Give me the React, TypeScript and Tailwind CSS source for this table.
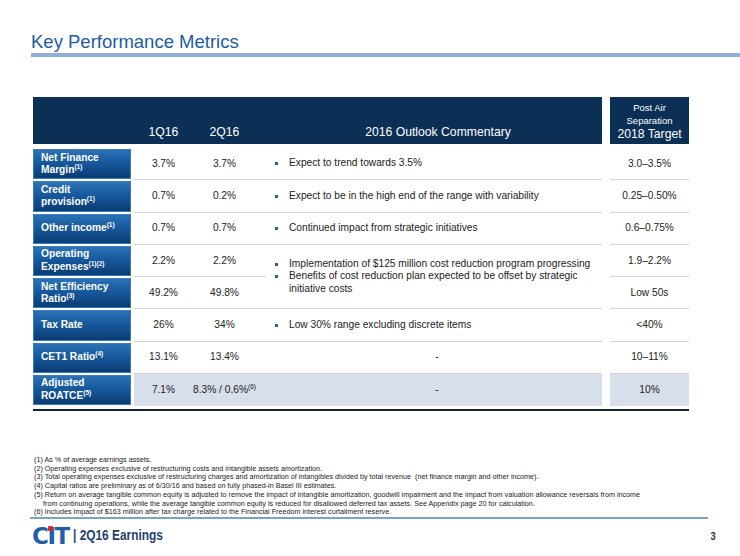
import React from 'react';

type Row = {
  label: string[];
  sup?: string;
  q1: string;
  q2: React.ReactNode;
  comment?: string[] | null; // null = covered by merged cell above
  dash?: boolean;
  target: string;
  span?: boolean;
  last?: boolean;
};

const rows: Row[] = [
  { label: ['Net Finance', 'Margin'], sup: '(1)', q1: '3.7%', q2: '3.7%', comment: ['Expect to trend towards 3.5%'], target: '3.0–3.5%' },
  { label: ['Credit', 'provision'], sup: '(1)', q1: '0.7%', q2: '0.2%', comment: ['Expect to be in the high end of the range with variability'], target: '0.25–0.50%' },
  { label: ['Other income'], sup: '(1)', q1: '0.7%', q2: '0.7%', comment: ['Continued impact from strategic initiatives'], target: '0.6–0.75%' },
  {
    label: ['Operating', 'Expenses'],
    sup: '(1)(2)',
    q1: '2.2%',
    q2: '2.2%',
    comment: [
      'Implementation of $125 million cost reduction program progressing',
      'Benefits of cost reduction plan expected to be offset by strategic initiative costs',
    ],
    span: true,
    target: '1.9–2.2%',
  },
  { label: ['Net Efficiency', 'Ratio'], sup: '(3)', q1: '49.2%', q2: '49.8%', comment: null, target: 'Low 50s' },
  { label: ['Tax Rate'], q1: '26%', q2: '34%', comment: ['Low 30% range excluding discrete items'], target: '<40%' },
  { label: ['CET1 Ratio'], sup: '(4)', q1: '13.1%', q2: '13.4%', dash: true, target: '10–11%' },
  {
    label: ['Adjusted', 'ROATCE'],
    sup: '(5)',
    q1: '7.1%',
    q2: (
      <span className="whitespace-nowrap">
        8.3% / 0.6%<sup className="text-[6.5px] relative -top-[4px]">(6)</sup>
      </span>
    ),
    dash: true,
    target: '10%',
    last: true,
  },
];

const notes = [
  '(1) As % of average earnings assets.',
  '(2) Operating expenses exclusive of restructuring costs and intangible assets amortization.',
  '(3) Total operating expenses exclusive of restructuring charges and amortization of intangibles divided by total revenue  (net finance margin and other income).',
  '(4) Capital ratios are preliminary as of 6/30/16 and based on fully phased-in Basel III estimates.',
  '(5) Return on average tangible common equity is adjusted to remove the impact of intangible amortization, goodwill impairment and the impact from valuation allowance reversals from income',
];

function Bullet({ text }: { text: string }) {
  return (
    <div className="flex items-start">
      <span className="w-[3px] h-[3px] bg-[#2a5f98] mt-[5px] ml-[9px] mr-[11px] shrink-0" />
      <span>{text}</span>
    </div>
  );
}

export default function App() {
  return (
    <div className="w-[740px] h-[556px] bg-white overflow-hidden font-['Liberation_Sans',Arial,sans-serif] text-[#222]">
      {/* Title */}
      <div className="pt-[31px] pl-[31px]">
        <h1 className="text-[18.5px] leading-[22px] text-[#1d5ca3]">Key Performance Metrics</h1>
        <div className="h-[4px] bg-[#8faed3]" />
      </div>

      {/* Table */}
      <div className="ml-[33px] mt-[40px] w-[656px]">
        <div className="grid grid-cols-[98px_3px_59px_73px_336px_8px_79px] grid-rows-[47px_4px_repeat(8,32.25px)] text-[10.2px]">
          {/* header */}
          <div className="bg-[#0c2f56]" />
          <div className="bg-[#0c2f56]" />
          <div className="bg-[#0c2f56] text-white text-[12.2px] flex items-end justify-center pb-[3px]">1Q16</div>
          <div className="bg-[#0c2f56] text-white text-[12.2px] flex items-end justify-center pb-[3px] pr-[10px]">2Q16</div>
          <div className="bg-[#0c2f56] text-white text-[12.2px] flex items-end justify-center pb-[3px] pl-[8px]">2016 Outlook Commentary</div>
          <div />
          <div className="bg-[#0c2f56] text-white flex flex-col items-center justify-end pb-[3px] text-center">
            <span className="text-[9.5px] leading-[13px]">Post Air</span>
            <span className="text-[9.5px] leading-[13px]">Separation</span>
            <span className="text-[12.2px] leading-[14px]">2018 Target</span>
          </div>
          {/* spacer row */}
          <div className="col-span-7" />

          {rows.map((r, i) => {
            const cell = r.last ? 'bg-[#d6dfea]' : 'border-b border-[#d3d3d3]';
            return (
              <React.Fragment key={i}>
                <div className="py-[1px]">
                  <div className="h-full bg-gradient-to-b from-[#2b72b6] via-[#15569a] to-[#0a3c73] border border-[#3a7cbc] text-white font-bold text-[10.2px] leading-[12.5px] pl-[7px] flex flex-col justify-center">
                    {r.label.map((l, j) => (
                      <span key={j} className="whitespace-nowrap">
                        {l}
                        {j === r.label.length - 1 && r.sup && (
                          <sup className="text-[6.5px] relative -top-[4px]">{r.sup}</sup>
                        )}
                      </span>
                    ))}
                  </div>
                </div>
                <div />
                <div className={`${cell} flex items-center justify-center`}>{r.q1}</div>
                <div className={`${cell} flex items-center justify-center pr-[10px]`}>{r.q2}</div>
                {r.comment !== null && (
                  <div className={`${cell} ${r.span ? 'row-span-2' : ''} flex flex-col justify-center leading-[12.5px]`}>
                    {r.dash ? (
                      <div className="text-center pl-[6px]">-</div>
                    ) : (
                      r.comment!.map((c, k) => <Bullet key={k} text={c} />)
                    )}
                  </div>
                )}
                <div />
                <div className={`${cell} flex items-center justify-center`}>{r.target}</div>
              </React.Fragment>
            );
          })}
        </div>
        <div className="mt-[3px] h-[2px] bg-[#13243c]" />
      </div>

      {/* Footnotes */}
      <div className="ml-[34px] mt-[45px] text-[7.2px] leading-[8.7px] text-[#1a1a1a] whitespace-pre">
        {notes.map((n, i) => (
          <div key={i}>{n}</div>
        ))}
        <div className="pl-[9px]">
          from continuing operations, while the average tangible common equity is reduced for disallowed deferred tax assets. See Appendix page 20 for calculation.
        </div>
        <div>(6) Includes impact of $163 million after tax charge related to the Financial Freedom interest curtailment reserve.</div>
      </div>
      <div className="ml-[30px] w-[678px] h-[2px] bg-[#7aa3cc]" />

      {/* Footer */}
      <div className="flex items-center pl-[32px] pr-[24px] mt-[7px] h-[20px]">
        <div className="flex items-end text-[#1e5fa6] font-black text-[23px] leading-[18px] tracking-[-1.5px] font-['DejaVu_Sans',sans-serif] relative">
          <span>C</span>
          <span className="relative">
            I
            <span className="absolute left-[1px] -top-[1px] w-[5px] h-[5px] bg-[#e0262b] rounded-[1px]" />
          </span>
          <span>T</span>
        </div>
        <span className="ml-[4px] inline-block origin-left scale-x-[0.82] text-[#1f3f6c] font-bold text-[14.5px] whitespace-nowrap">| 2Q16 Earnings</span>
        <span className="ml-auto inline-block scale-x-[0.85] text-[#333] font-bold text-[11px]">3</span>
      </div>
    </div>
  );
}
